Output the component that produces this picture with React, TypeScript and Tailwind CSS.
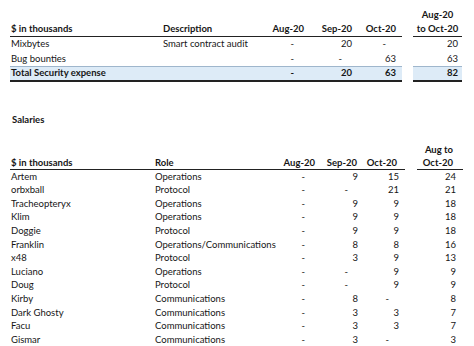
import React from "react";

type Val = number | null;

const security: { name: string; desc: string; vals: Val[]; total: number }[] = [
  { name: "Mixbytes", desc: "Smart contract audit", vals: [null, 20, null], total: 20 },
  { name: "Bug bounties", desc: "", vals: [null, null, 63], total: 63 },
];

const salaries: { name: string; role: string; vals: Val[]; total: number }[] = [
  { name: "Artem", role: "Operations", vals: [null, 9, 15], total: 24 },
  { name: "orbxball", role: "Protocol", vals: [null, null, 21], total: 21 },
  { name: "Tracheopteryx", role: "Operations", vals: [null, 9, 9], total: 18 },
  { name: "Klim", role: "Operations", vals: [null, 9, 9], total: 18 },
  { name: "Doggie", role: "Protocol", vals: [null, 9, 9], total: 18 },
  { name: "Franklin", role: "Operations/Communications", vals: [null, 8, 8], total: 16 },
  { name: "x48", role: "Protocol", vals: [null, 3, 9], total: 13 },
  { name: "Luciano", role: "Operations", vals: [null, null, 9], total: 9 },
  { name: "Doug", role: "Protocol", vals: [null, null, 9], total: 9 },
  { name: "Kirby", role: "Communications", vals: [null, 8, null], total: 8 },
  { name: "Dark Ghosty", role: "Communications", vals: [null, 3, 3], total: 7 },
  { name: "Facu", role: "Communications", vals: [null, 3, 3], total: 7 },
  { name: "Gismar", role: "Communications", vals: [null, 3, null], total: 3 },
];

const Num = ({ v }: { v: Val }) =>
  v === null ? <span className="pr-[10px]">-</span> : <span>{v}</span>;

const App = () => {
  return (
    <div className="w-[474px] h-[346px] bg-white text-[#161616] text-[9.5px] font-['Lato','Liberation_Sans',sans-serif] overflow-hidden pl-[10px]">
      {/* security table */}
      <div className="pt-[8px]">
        <div className="flex items-end font-bold leading-[14px]">
          <div className="flex items-end w-[392px] border-b border-[#222] h-[28px]">
            <div className="w-[153px] pl-[1px]">$ in thousands</div>
            <div className="w-[95px]">Description</div>
            <div className="w-[47px] text-right pr-[1px]">Aug-20</div>
            <div className="w-[48px] text-right pr-[1px]">Sep-20</div>
            <div className="w-[44px] text-right pr-[1px]">Oct-20</div>
          </div>
          <div className="w-[11px]" />
          <div className="w-[49px] border-b border-[#222] text-center">
            <div>Aug-20</div>
            <div>to Oct-20</div>
          </div>
        </div>
        {security.map((r, i) => (
          <div key={r.name} className={`flex items-center ${i === 0 ? "h-[15px]" : "h-[14px]"}`}>
            <div className="flex items-center w-[392px]">
              <div className="w-[153px] pl-[1px]">{r.name}</div>
              <div className="w-[95px]">{r.desc}</div>
              <div className="w-[47px] text-right pr-[1px]"><Num v={r.vals[0]} /></div>
              <div className="w-[48px] text-right pr-[1px]"><Num v={r.vals[1]} /></div>
              <div className="w-[44px] text-right pr-[1px]"><Num v={r.vals[2]} /></div>
            </div>
            <div className="w-[11px]" />
            <div className="w-[49px] text-right pr-[4px]">{r.total}</div>
          </div>
        ))}
        <div className="flex font-bold">
          <div className="flex items-center w-[392px] h-[16px] bg-[#ddebf7] border-t border-[#9fb6cc] border-b-2 border-b-[#222]">
            <div className="w-[153px] pl-[1px]">Total Security expense</div>
            <div className="w-[95px]" />
            <div className="w-[47px] text-right pr-[1px]"><Num v={null} /></div>
            <div className="w-[48px] text-right pr-[1px]">20</div>
            <div className="w-[44px] text-right pr-[1px]">63</div>
          </div>
          <div className="w-[11px]" />
          <div className="w-[49px] h-[16px] flex items-center justify-end pr-[4px] bg-[#ddebf7] border-t border-[#9fb6cc] border-b-2 border-b-[#222]">
            82
          </div>
        </div>
      </div>

      {/* salaries */}
      <div className="mt-[31px] h-[14px] leading-[14px] font-bold pl-[2px]">Salaries</div>

      <div className="mt-[16px]">
        <div className="flex items-end font-bold leading-[13px]">
          <div className="flex items-end w-[395px] border-b border-[#222] h-[26px]">
            <div className="w-[145px] pl-[1px]">$ in thousands</div>
            <div className="w-[115px]">Role</div>
            <div className="w-[46px] text-right pr-[1px]">Aug-20</div>
            <div className="w-[43px] text-right pr-[2px]">Sep-20</div>
            <div className="w-[41px] text-right pr-[3px]">Oct-20</div>
          </div>
          <div className="w-[12px]" />
          <div className="w-[46px] border-b border-[#222] text-right pr-[10px]">
            <div>Aug to</div>
            <div>Oct-20</div>
          </div>
        </div>
        {salaries.map((r) => (
          <div key={r.name} className="flex items-center h-[13.6px]">
            <div className="flex items-center w-[395px]">
              <div className="w-[145px] pl-[1px]">{r.name}</div>
              <div className="w-[115px]">{r.role}</div>
              <div className="w-[46px] text-right pr-[1px]"><Num v={r.vals[0]} /></div>
              <div className="w-[43px] text-right pr-[1px]"><Num v={r.vals[1]} /></div>
              <div className="w-[41px] text-right pr-[1px]"><Num v={r.vals[2]} /></div>
            </div>
            <div className="w-[12px]" />
            <div className="w-[46px] text-right pr-[7px]">{r.total}</div>
          </div>
        ))}
      </div>
    </div>
  );
};

export default App;
